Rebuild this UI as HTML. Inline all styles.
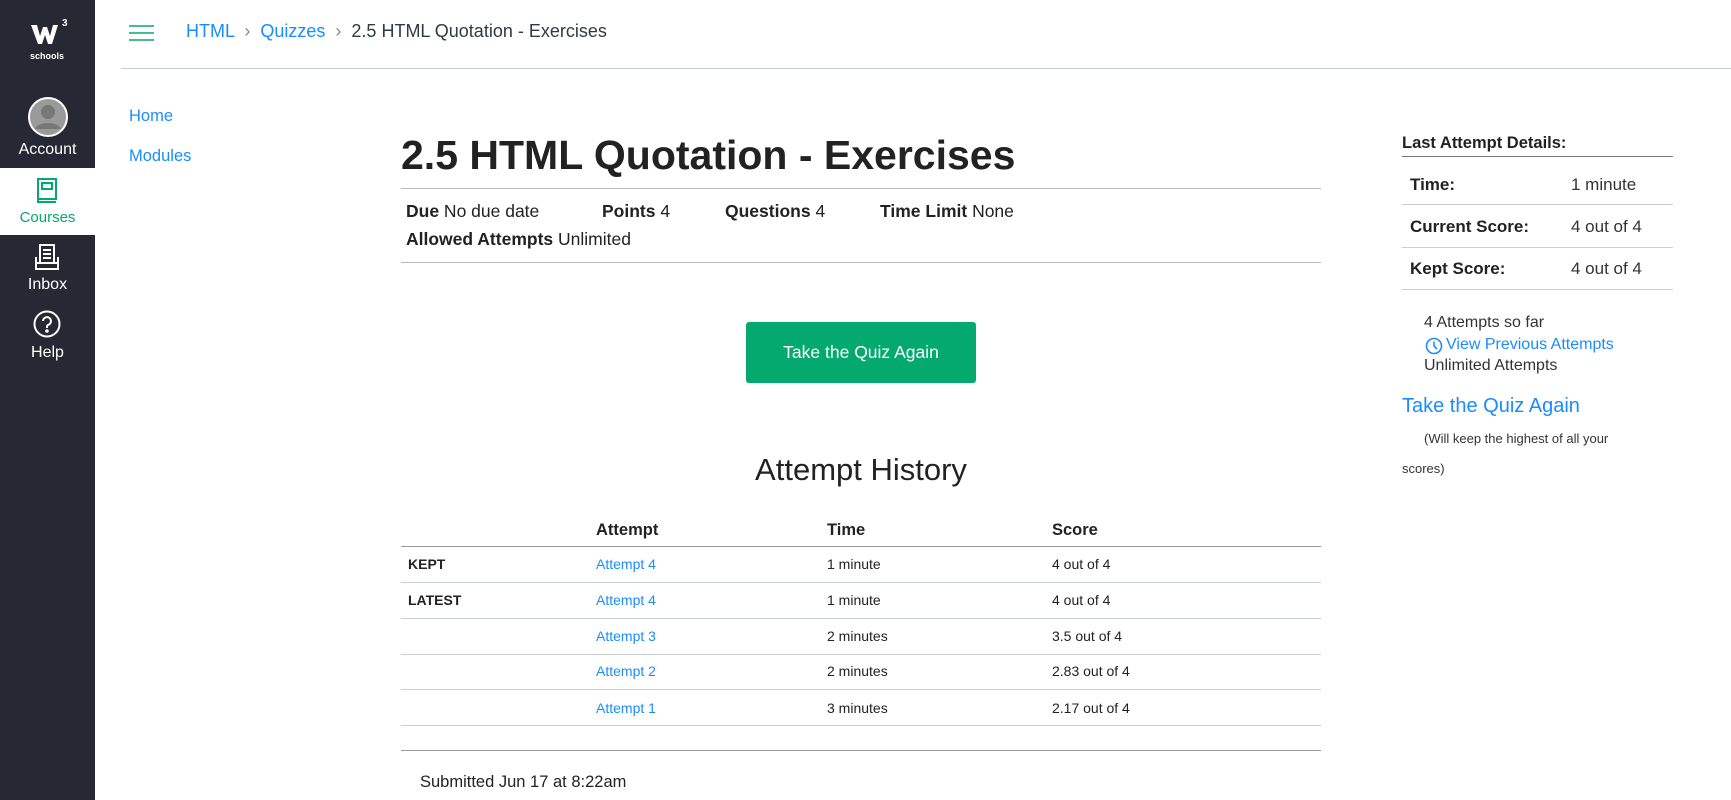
<!DOCTYPE html>
<html><head><meta charset="utf-8"><style>
*{margin:0;padding:0;box-sizing:border-box}
body{width:1731px;height:800px;overflow:hidden;background:#fff;font-family:"Liberation Sans",sans-serif;color:#2d3b45;position:relative}
.abs{position:absolute;white-space:nowrap}
.sb{position:absolute;left:0;top:0;width:95px;height:800px;background:#262833}
.nav{position:absolute;left:0;width:95px;text-align:center;color:#fff;font-size:15px}
a,.lnk{color:#1a8cff;text-decoration:none}
.b{font-weight:bold;color:#222}
.hr{position:absolute;height:1px;background:#c7cdd1}
</style></head><body>
<div class="sb"></div>
<svg class="abs" style="left:30px;top:22px" width="36" height="24" viewBox="0 0 36 24"><path d="M1 3h6l3 11 3-9h4l3 9 3-11h5l-6 19h-4l-3-9-3 9h-4z" fill="#fff"/></svg>
<div class="abs" style="left:62px;top:18px;color:#fff;font-size:10px;font-weight:bold">3</div>
<div class="abs" style="left:30px;top:51px;color:#fff;font-size:9px;font-weight:bold">schools</div>
<svg class="abs" style="left:27px;top:96px" width="42" height="42" viewBox="0 0 42 42"><circle cx="21" cy="21" r="19" fill="#9a9a9a" stroke="#fff" stroke-width="2"/><circle cx="21" cy="16" r="7" fill="#777"/><path d="M8 33c3-8 23-8 26 0" fill="#777"/></svg>
<div class="nav" style="top:141px;font-size:16px">Account</div>
<div style="position:absolute;left:0;top:168px;width:95px;height:67px;background:#fff"></div>
<svg class="abs" style="left:36px;top:178px" width="22" height="26" viewBox="0 0 22 26" fill="none" stroke="#04aa6d" stroke-width="2"><rect x="2" y="1" width="18" height="20"/><rect x="6" y="5" width="10" height="6"/><path d="M2 21v3h18"/></svg>
<div class="nav" style="top:209px;color:#04aa6d">Courses</div>
<svg class="abs" style="left:34px;top:243px" width="26" height="28" viewBox="0 0 26 28" fill="none" stroke="#fff" stroke-width="2"><rect x="6" y="2" width="14" height="18"/><path d="M9 7h8M9 11h8M9 15h8M2 14v12h22V14M2 20h22"/></svg>
<div class="nav" style="top:276px;font-size:16px">Inbox</div>
<svg class="abs" style="left:33px;top:310px" width="28" height="28" viewBox="0 0 28 28" fill="none" stroke="#fff" stroke-width="2"><circle cx="14" cy="14" r="12.5"/><path d="M10 11a4 4 0 1 1 5 4c-1 .5-1 1-1 3"/><circle cx="14" cy="21" r=".8" fill="#fff"/></svg>
<div class="nav" style="top:344px;font-size:16px">Help</div>

<svg class="abs" style="left:129px;top:24px" width="25" height="18"><path d="M0 2h25M0 9h25M0 16h25" stroke="#04aa6d" stroke-width="1.5"/></svg>
<div class="abs" style="left:186px;top:21px;font-size:18px;color:#2d3b45"><a>HTML</a> <span style="color:#888;margin:0 5px">›</span> <a>Quizzes</a> <span style="color:#888;margin:0 5px">›</span> 2.5 HTML Quotation - Exercises</div>
<div class="hr" style="left:121px;top:68px;width:1610px"></div>

<div class="abs lnk" style="left:129px;top:107px;font-size:16.5px">Home</div>
<div class="abs lnk" style="left:129px;top:147px;font-size:16.5px">Modules</div>

<div class="abs" style="left:401px;top:132px;font-size:41px;font-weight:bold;color:#222">2.5 HTML Quotation - Exercises</div>
<div class="hr" style="left:401px;top:188px;width:920px;background:#bbb"></div>
<div class="abs" style="left:406px;top:201px;font-size:17.5px;color:#222"><span class="b">Due</span> No due date</div>
<div class="abs" style="left:602px;top:201px;font-size:17.5px;color:#222"><span class="b">Points</span> 4</div>
<div class="abs" style="left:725px;top:201px;font-size:17.5px;color:#222"><span class="b">Questions</span> 4</div>
<div class="abs" style="left:880px;top:201px;font-size:17.5px;color:#222"><span class="b">Time Limit</span> None</div>
<div class="abs" style="left:406px;top:229px;font-size:17.5px;color:#222"><span class="b">Allowed Attempts</span> Unlimited</div>
<div class="hr" style="left:401px;top:262px;width:920px;background:#bbb"></div>

<div class="abs" style="left:746px;top:322px;width:230px;height:61px;background:#04aa6d;border-radius:3px;color:#fff;font-size:17.5px;text-align:center;line-height:61px">Take the Quiz Again</div>

<div class="abs" style="left:401px;top:452px;width:920px;text-align:center;font-size:31px;color:#222">Attempt History</div>
<div class="abs" style="left:596px;top:521px;font-size:16.5px;font-weight:bold;color:#222">Attempt</div>
<div class="abs" style="left:827px;top:521px;font-size:16.5px;font-weight:bold;color:#222">Time</div>
<div class="abs" style="left:1052px;top:521px;font-size:16.5px;font-weight:bold;color:#222">Score</div>
<div class="hr" style="left:401px;top:546px;width:920px;background:#999"></div>

<div class="abs" style="left:408px;top:556px;font-size:14px;font-weight:bold;color:#222">KEPT</div>
<div class="abs lnk" style="left:596px;top:556px;font-size:14px">Attempt 4</div>
<div class="abs" style="left:827px;top:556px;font-size:14px;color:#222">1 minute</div>
<div class="abs" style="left:1052px;top:556px;font-size:14px;color:#222">4 out of 4</div>
<div class="hr" style="left:401px;top:582px;width:920px"></div>
<div class="abs" style="left:408px;top:592px;font-size:14px;font-weight:bold;color:#222">LATEST</div>
<div class="abs lnk" style="left:596px;top:592px;font-size:14px">Attempt 4</div>
<div class="abs" style="left:827px;top:592px;font-size:14px;color:#222">1 minute</div>
<div class="abs" style="left:1052px;top:592px;font-size:14px;color:#222">4 out of 4</div>
<div class="hr" style="left:401px;top:618px;width:920px"></div>
<div class="abs lnk" style="left:596px;top:628px;font-size:14px">Attempt 3</div>
<div class="abs" style="left:827px;top:628px;font-size:14px;color:#222">2 minutes</div>
<div class="abs" style="left:1052px;top:628px;font-size:14px;color:#222">3.5 out of 4</div>
<div class="hr" style="left:401px;top:654px;width:920px"></div>
<div class="abs lnk" style="left:596px;top:663px;font-size:14px">Attempt 2</div>
<div class="abs" style="left:827px;top:663px;font-size:14px;color:#222">2 minutes</div>
<div class="abs" style="left:1052px;top:663px;font-size:14px;color:#222">2.83 out of 4</div>
<div class="hr" style="left:401px;top:689px;width:920px"></div>
<div class="abs lnk" style="left:596px;top:700px;font-size:14px">Attempt 1</div>
<div class="abs" style="left:827px;top:700px;font-size:14px;color:#222">3 minutes</div>
<div class="abs" style="left:1052px;top:700px;font-size:14px;color:#222">2.17 out of 4</div>
<div class="hr" style="left:401px;top:725px;width:920px"></div>
<div class="hr" style="left:401px;top:750px;width:920px;background:#999"></div>
<div class="abs" style="left:420px;top:773px;font-size:16.5px;color:#222">Submitted Jun 17 at 8:22am</div>

<div class="abs" style="left:1402px;top:134px;font-size:16.5px;font-weight:bold;color:#222">Last Attempt Details:</div>
<div class="hr" style="left:1402px;top:156px;width:271px;background:#777"></div>
<div class="abs" style="left:1410px;top:175px;font-size:17px;font-weight:bold;color:#222">Time:</div>
<div class="abs" style="left:1571px;top:175px;font-size:17px;color:#333">1 minute</div>
<div class="hr" style="left:1402px;top:204px;width:271px"></div>
<div class="abs" style="left:1410px;top:217px;font-size:17px;font-weight:bold;color:#222">Current Score:</div>
<div class="abs" style="left:1571px;top:217px;font-size:17px;color:#333">4 out of 4</div>
<div class="hr" style="left:1402px;top:247px;width:271px"></div>
<div class="abs" style="left:1410px;top:259px;font-size:17px;font-weight:bold;color:#222">Kept Score:</div>
<div class="abs" style="left:1571px;top:259px;font-size:17px;color:#333">4 out of 4</div>
<div class="hr" style="left:1402px;top:289px;width:271px"></div>
<div class="abs" style="left:1424px;top:314px;font-size:16px;color:#333">4 Attempts so far</div>
<svg class="abs" style="left:1425px;top:337px" width="18" height="18" fill="none" stroke="#1a8cff" stroke-width="1.6"><circle cx="9" cy="9" r="7.5"/><path d="M9 4.5V9l3 3"/></svg>
<div class="abs lnk" style="left:1446px;top:336px;font-size:16px">View Previous Attempts</div>
<div class="abs" style="left:1424px;top:357px;font-size:16px;color:#333">Unlimited Attempts</div>
<div class="abs lnk" style="left:1402px;top:395px;font-size:20px">Take the Quiz Again</div>
<div class="abs" style="left:1424px;top:431px;font-size:13px;color:#333">(Will keep the highest of all your</div>
<div class="abs" style="left:1402px;top:461px;font-size:13px;color:#333">scores)</div>
</body></html>
